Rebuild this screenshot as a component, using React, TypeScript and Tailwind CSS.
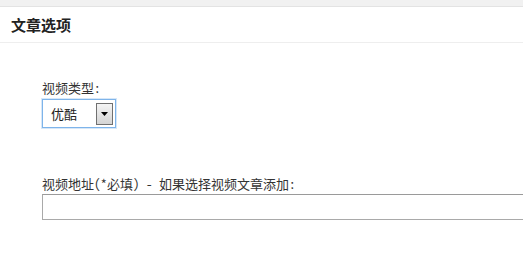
import React from "react";

export default function App() {
  const cjk = { fontFamily: '"Noto Sans Mono CJK SC", "Noto Sans CJK SC", sans-serif' };
  return (
    <div className="w-[523px] h-[261px] bg-white overflow-hidden text-[#333]" style={cjk}>
      <div className="h-[7px] bg-[#f1f1f1] border-b border-[#e3e3e3]" />
      <div className="h-[36px] flex items-center px-[11px] border-b border-[#eeeeee]">
        <span
          className="text-[15px] font-bold text-[#222] leading-none"
          style={{ fontFamily: '"Noto Sans CJK SC", sans-serif' }}
        >
          文章选项
        </span>
      </div>
      <div className="pl-[42px] pt-[37px] flex flex-col">
        <div className="text-[13px] leading-[16px] h-[16px]">视频类型:</div>
        <div className="mt-[3px] w-[74px] h-[29px] border border-[#7eb4ea] shadow-[0_0_0_1px_#d6e7f8] bg-white flex items-center justify-between pl-[8px] pr-[2px]">
          <span className="text-[13px] leading-none text-[#222]">优酷</span>
          <div className="w-[17px] h-[22px] border border-[#707070] bg-gradient-to-b from-[#f4f4f4] to-[#d4d4d4] flex items-center justify-center">
            <svg width="7" height="4" viewBox="0 0 7 4">
              <path d="M0 0H7L3.5 4Z" fill="#000" />
            </svg>
          </div>
        </div>
        <div className="mt-[48px] text-[13px] leading-[16px] h-[16px] whitespace-nowrap">
          视频地址(*必填) - 如果选择视频文章添加:
        </div>
        <div className="mt-[2px] w-[500px] h-[26px] border border-[#a9a9a9] border-t-[#9a9a9a] bg-white" />
      </div>
    </div>
  );
}
